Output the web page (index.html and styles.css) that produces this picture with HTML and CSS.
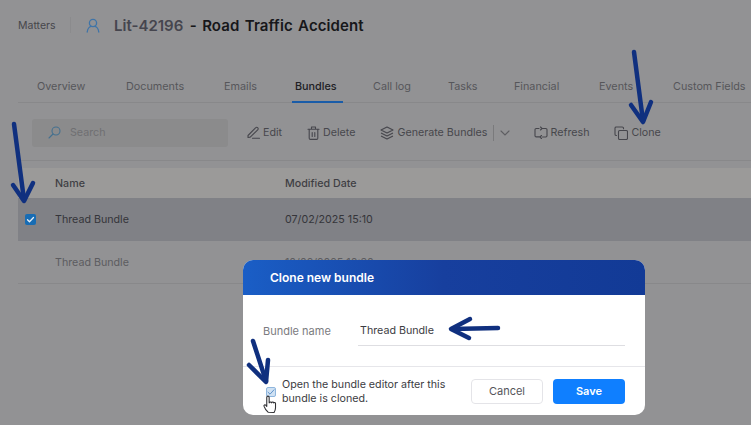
FILE: index.html
```html
<!DOCTYPE html>
<html lang="en">
<head>
    <meta charset="UTF-8">
    <title>Clone bundle</title>
    <link rel="stylesheet" href="styles.css">
</head>
<body>
<div class="page">
    <div class="title-bar">
        <span class="crumb">Matters</span>
        <span class="crumb-sep"></span>
        <svg class="person" width="14" height="15" viewBox="0 0 14 15" fill="none" stroke="#3f74a8" stroke-width="1.3" stroke-linecap="round"><circle cx="7" cy="5" r="3.6"/><path d="M1.2 14c.4-3.4 2.6-5.4 4-5.6M12.8 14c-.4-3.4-2.6-5.4-4-5.6"/></svg>
        <h1 class="matter-title"><span class="matter-id">Lit-42196</span> - Road Traffic Accident</h1>
    </div>

    <div class="tabs">
        <a class="tab">Overview</a>
        <a class="tab">Documents</a>
        <a class="tab">Emails</a>
        <a class="tab active">Bundles</a>
        <a class="tab">Call log</a>
        <a class="tab">Tasks</a>
        <a class="tab">Financial</a>
        <a class="tab">Events</a>
        <a class="tab">Custom Fields</a>
    </div>

    <div class="toolbar">
        <div class="search">
            <svg width="13" height="13" viewBox="0 0 13 13" fill="none" stroke="#44708f" stroke-width="1.1" stroke-linecap="round"><circle cx="8" cy="5" r="4"/><path d="M5 8l-4 4"/></svg>
            <span>Search</span>
        </div>
        <a class="tool tool-edit">
            <svg width="13" height="13" viewBox="0 0 13 13" fill="none" stroke="#46464c" stroke-width="1.1" stroke-linecap="round" stroke-linejoin="round"><path d="M1 9.5L8.5 1.8a1.4 1.4 0 0 1 2.2 2L3.2 11.2 1 11.4zM5.5 12.2h7"/></svg>
            Edit
        </a>
        <a class="tool tool-delete">
            <svg width="13" height="14" viewBox="0 0 13 14" fill="none" stroke="#46464c" stroke-width="1.1" stroke-linecap="round" stroke-linejoin="round"><path d="M1 3.2h11M4.5 3V1h4v2M2.2 3.2v9a1.2 1.2 0 0 0 1.2 1.2h6.2a1.2 1.2 0 0 0 1.2-1.2v-9M5.2 6.5v4M7.8 6.5v4"/></svg>
            Delete
        </a>
        <a class="tool tool-generate">
            <svg width="14" height="14" viewBox="0 0 14 14" fill="none" stroke="#46464c" stroke-width="1.1" stroke-linejoin="round"><path d="M7 1l6 3-6 3-6-3zM1 7l6 3 6-3M1 10l6 3 6-3"/></svg>
            Generate Bundles
        </a>
        <span class="tool-sep"></span>
        <svg class="chevron" width="10" height="6" viewBox="0 0 10 6" fill="none" stroke="#5e5e62" stroke-width="1.1" stroke-linecap="round"><path d="M1 1l4 4 4-4"/></svg>
        <a class="tool tool-refresh">
            <svg width="14" height="14" viewBox="0 0 14 14" fill="none" stroke="#46464c" stroke-width="1.1" stroke-linecap="round" stroke-linejoin="round"><path d="M5 2.500H2.200A1.200 1.200 0 0 0 1 3.700v6a1.200 1.200 0 0 0 1.200 1.200H6M8.500 11h3.300A1.200 1.200 0 0 0 13 9.800V3.700a1.200 1.200 0 0 0-1.200-1.200H8M6.500 1L8 2.500 6.500 4M7.500 9.500L6 11l1.500 1.500"/></svg>
            Refresh
        </a>
        <a class="tool tool-clone">
            <svg width="14" height="14" viewBox="0 0 14 14" fill="none" stroke="#46464c" stroke-width="1.1" stroke-linecap="round" stroke-linejoin="round"><rect x="4.500" y="4.500" width="9" height="9" rx="1.200"/><path d="M2.500 9.500h-.5A1.200 1.200 0 0 1 1 8.300V2A1.200 1.200 0 0 1 2.200 1h6A1.200 1.200 0 0 1 9.500 2.200v.5"/></svg>
            Clone
        </a>
    </div>

    <div class="bundles">
        <div class="row head">
            <span class="cell-check"></span>
            <span class="cell-name">Name</span>
            <span>Modified Date</span>
        </div>
        <div class="row selected">
            <span class="cell-check"><span class="check">
                <svg width="9" height="9" viewBox="0 0 9 9" fill="none" stroke="#e6eef6" stroke-width="1.300" stroke-linecap="round" stroke-linejoin="round"><path d="M1.500 4.800l2 2 4-4.300"/></svg>
            </span></span>
            <span class="cell-name">Thread Bundle</span>
            <span>07/02/2025 15:10</span>
        </div>
        <div class="row plain">
            <span class="cell-check"></span>
            <span class="cell-name">Thread Bundle</span>
            <span>10/02/2025 10:30</span>
        </div>
    </div>
</div>

<div class="modal">
    <div class="modal-head">Clone new bundle</div>
    <div class="modal-body">
        <label class="field-label">Bundle name</label>
        <div class="field-value">Thread Bundle</div>
    </div>
    <div class="modal-foot">
        <span class="open-check">
            <svg width="8" height="8" viewBox="0 0 8 8" fill="none" stroke="#5f93c9" stroke-width="1" stroke-linecap="round" stroke-linejoin="round"><path d="M1 4.200l2 2 4-4.400"/></svg>
        </span>
        <p class="open-text">Open the bundle editor after this<br>bundle is cloned.</p>
        <button class="btn btn-cancel">Cancel</button>
        <button class="btn btn-save">Save</button>
    </div>
</div>

<!-- annotations drawn over the screenshot -->
<svg class="marks" width="751" height="425" viewBox="0 0 751 425" fill="none" stroke="#10307f" stroke-linecap="round" stroke-linejoin="round">
    <g stroke-width="4.500">
        <path d="M14 124L24 200"/>
        <path d="M13 185L24 201L33 183"/>
        <path d="M634 52L643 121"/>
        <path d="M631 105L643 122L651 102"/>
        <path d="M498 328L452 329"/>
        <path d="M470 319L451 329L469 338"/>
        <path d="M253 341L266 381"/>
        <path d="M249 365L266 382L268 360"/>
    </g>
    <path transform="translate(-57 -81) scale(1.2)" d="M271 411c-1.500-1-3-3.500-3.500-5-.3-1 .8-1.500 1.500-.8l.8 1v-7.500c0-1.500 2-1.500 2 0v4.500c.2-1 1.800-1 2 0 .2-.9 1.700-.9 1.800.1.300-.7 1.500-.5 1.500.5v3.500c0 1.500-.5 2.800-1.200 4z" fill="#fff" stroke="#2f2f33" stroke-width=".9"/>
</svg>
</body>
</html>
```

FILE: styles.css
```css
* {
    box-sizing: border-box;
}
html, body {
    margin: 0;
    height: 100%;
}
body {
    position: relative;
    width: 751px;
    height: 425px;
    overflow: hidden;
    background-color: #929294;
    font-family: Inter, "Liberation Sans", sans-serif;
    font-size: 10.700px;
    color: #47474c;
}
.page {
    padding: 14px 0 0 18px;
}

/* title */
.title-bar {
    display: flex;
    align-items: center;
    height: 22px;
}
.crumb {
    width: 52px;
    font-size: 10.500px;
    color: #46464b;
}
.crumb-sep {
    width: 1px;
    height: 16px;
    background-color: #8b8b8d;
}
.person {
    margin-left: 15px;
}
.matter-title {
    margin: 0 0 0 14px;
    font-size: 15px;
    font-weight: 600;
    letter-spacing: .1px;
    color: #17171a;
    word-spacing: 1.500px;
    white-space: nowrap;
}
.matter-id {
    color: #45454e;
    letter-spacing: 0;
    margin-right: 1px;
}

/* tabs */
.tabs {
    display: grid;
    grid-template-columns: 89px 98px 71px 78px 75px 66px 85px 74px auto;
    height: 36px;
    margin-top: 31px;
    padding-left: 16px;
    border-bottom: 1px solid #88888a;
    white-space: nowrap;
    font-size: 10.800px;
    color: #56565a;
}
.tab {
    justify-self: start;
    height: 36px;
    padding: 13px 5px 0 3px;
}
.tab.active {
    padding-right: 6px;
    color: #202024;
    font-weight: 500;
    border-bottom: 2px solid #1a5ca8;
}

/* toolbar */
.toolbar {
    display: flex;
    align-items: center;
    height: 58px;
    padding: 2px 0 0 14px;
    border-bottom: 1px solid #88888a;
    white-space: nowrap;
}
.search {
    display: flex;
    align-items: center;
    gap: 9px;
    width: 196px;
    height: 28px;
    padding-left: 16px;
    border-radius: 3px;
    background-color: #8b8b8c;
    color: #6f6f72;
}
.tool {
    display: flex;
    align-items: center;
    gap: 3px;
}
.tool-edit {
    margin-left: 19px;
}
.tool-delete {
    margin-left: 25px;
}
.tool-generate {
    margin-left: 25px;
}
.tool-sep {
    width: 1px;
    height: 16px;
    margin-left: 5px;
    background-color: #7a7a7c;
}
.chevron {
    margin-left: 6px;
}
.tool-refresh {
    margin-left: 24px;
}
.tool-clone {
    margin-left: 25px;
}

/* table */
.bundles {
    margin-top: 7px;
}
.row {
    display: flex;
    align-items: center;
    white-space: nowrap;
}
.cell-check {
    display: flex;
    width: 37px;
    padding-left: 7px;
}
.cell-name {
    width: 230px;
}
.head {
    height: 30px;
    background-color: #9b9a99;
    font-weight: 500;
    color: #3f3f44;
}
.selected {
    height: 43px;
    background-color: #808186;
    color: #35353a;
}
.plain {
    height: 43px;
    border-bottom: 1px solid #88888a;
    color: #5c5c60;
}
.check {
    display: flex;
    align-items: center;
    justify-content: center;
    width: 11px;
    height: 11px;
    border-radius: 2px;
    background-color: #176cb4;
}

/* dialog */
.modal {
    position: absolute;
    left: 243px;
    top: 260px;
    width: 402px;
    height: 155px;
    border-radius: 10px;
    overflow: hidden;
    background-color: #fff;
}
.modal-head {
    height: 35px;
    padding: 10px 0 0 27px;
    background: linear-gradient(90deg, #1a5ec6, #173f9e 50%, #123a96);
    color: #fff;
    font-size: 12px;
    font-weight: 600;
}
.modal-body {
    display: flex;
    align-items: center;
    height: 72px;
    padding: 0 20px;
    border-bottom: 1px solid #e6e6ea;
}
.field-label {
    width: 95px;
    font-size: 11px;
    color: #7b7b80;
}
.field-value {
    flex: 1;
    height: 30px;
    margin-top: 1px;
    padding: 8px 0 0 2px;
    border-bottom: 1px solid #dedee2;
    color: #3c3c42;
}
.modal-foot {
    display: flex;
    align-items: center;
    height: 48px;
    padding-left: 23px;
}
.open-check {
    display: flex;
    align-items: center;
    justify-content: center;
    width: 10px;
    height: 10px;
    margin-top: 2px;
    border: 1px solid #8fb6dd;
    border-radius: 2px;
    background-color: #cfe1f3;
}
.open-text {
    width: 189px;
    margin: 2px 0 0 6px;
    line-height: 14px;
    color: #3c3c42;
}
.btn {
    width: 72px;
    height: 25px;
    border-radius: 4px;
    font-family: inherit;
    font-size: 11px;
}
.btn-cancel {
    border: 1px solid #e4e4e8;
    background-color: #fff;
    color: #55555a;
}
.btn-save {
    margin-left: 10px;
    border: 0;
    background-color: #0f7fff;
    color: #fff;
    font-weight: 600;
}
.marks {
    position: absolute;
    left: 0;
    top: 0;
}
```
